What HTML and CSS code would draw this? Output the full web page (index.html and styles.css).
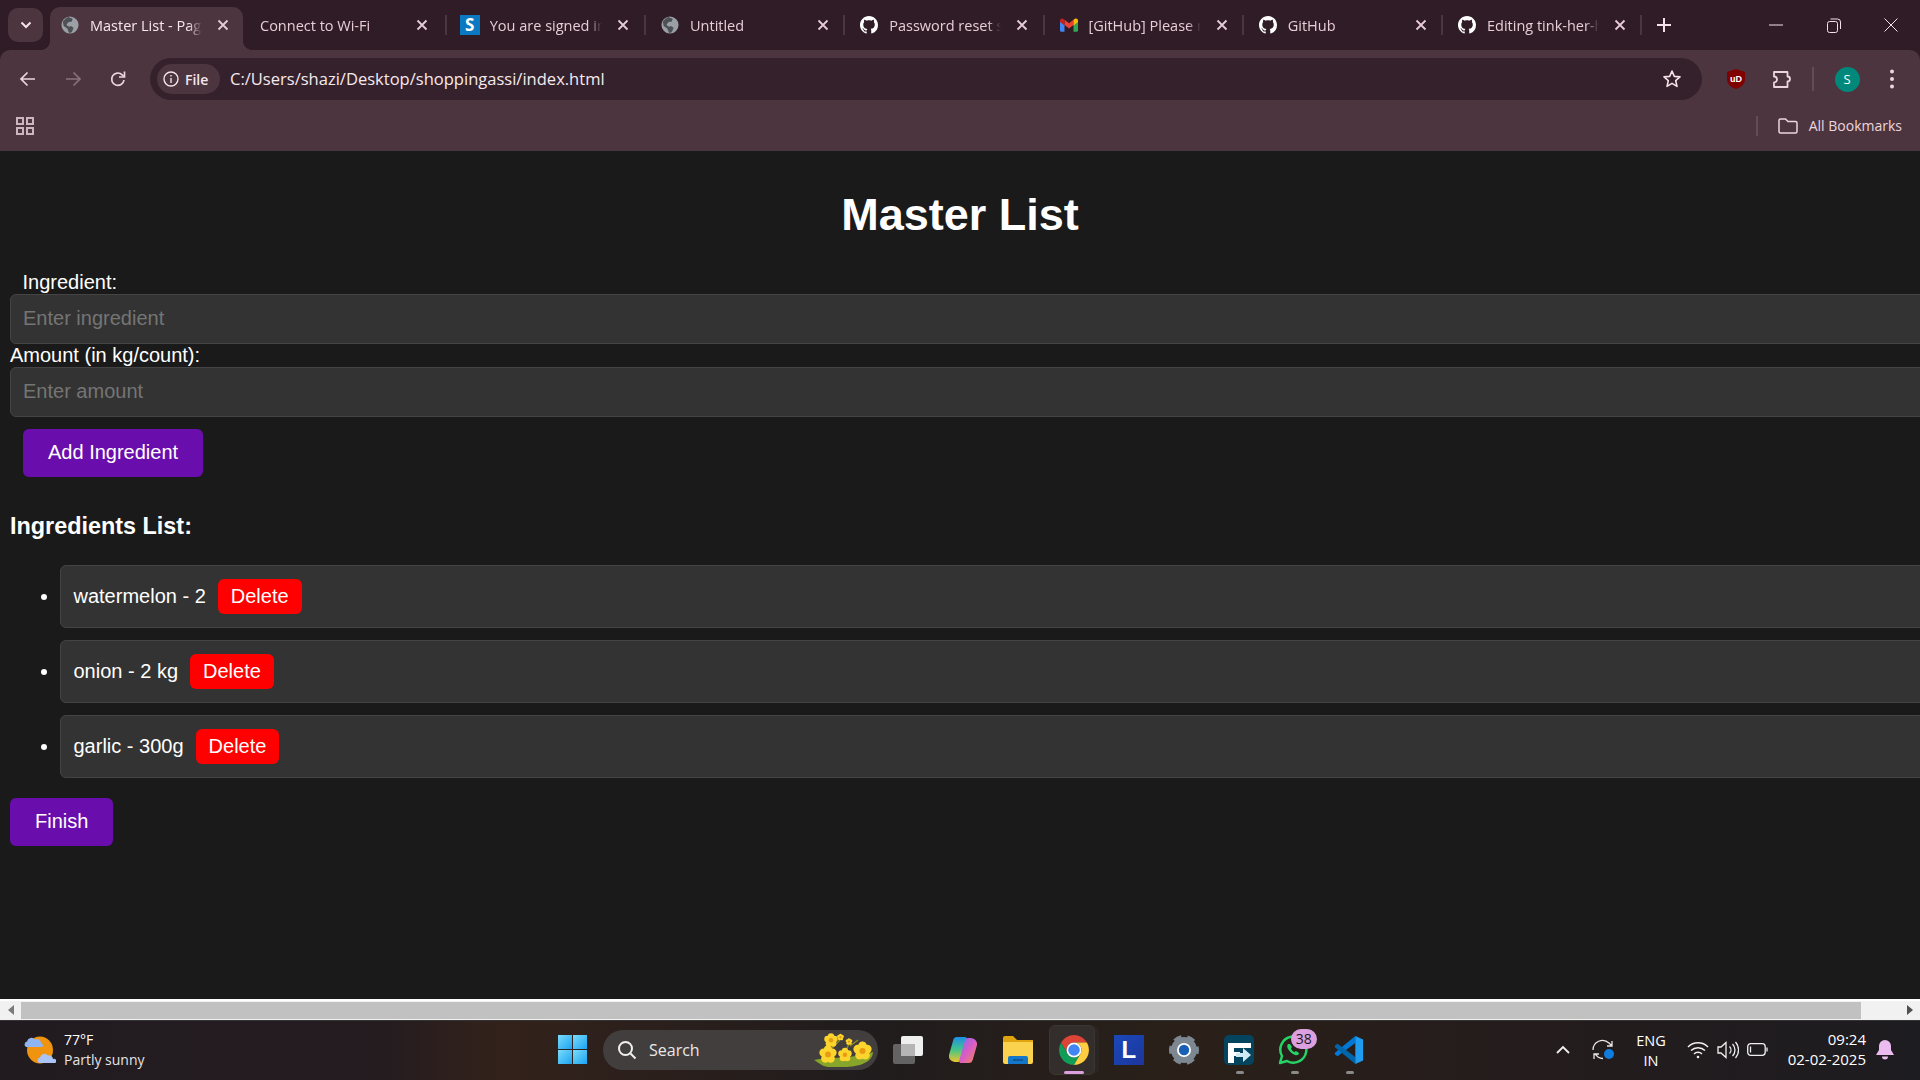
FILE: index.html
```html
<!DOCTYPE html>
<html lang="en">

<head>
    <meta charset="UTF-8">
    <title>Master List - Page</title>
    <link rel="stylesheet" href="styles.css">
</head>

<body>
    <!-- shared icons -->
    <svg class="defs" width="0" height="0">
        <symbol id="globe" viewBox="0 0 20 20">
            <circle cx="10" cy="10" r="9.500" fill="#9aa0a6" />
            <path d="M8 1 13 3 12 6 8 7 6 10 9 12 11 11 14 13 12 18 9 19 7 14 3 11 2 6 5 3z" fill="#4d5156" />
        </symbol>
        <symbol id="github" viewBox="0 0 16 16">
            <path fill="#fff" d="M8 0C3.58 0 0 3.58 0 8c0 3.54 2.29 6.53 5.47 7.59.4.07.55-.17.55-.38 0-.19-.01-.82-.01-1.49-2.01.37-2.53-.49-2.69-.94-.09-.23-.48-.94-.82-1.13-.28-.15-.68-.52-.01-.53.63-.01 1.08.58 1.23.82.72 1.21 1.87.87 2.33.66.07-.52.28-.87.51-1.07-1.78-.2-3.64-.89-3.64-3.95 0-.87.31-1.59.82-2.15-.08-.2-.36-1.02.08-2.12 0 0 .67-.21 2.2.82.64-.18 1.32-.27 2-.27.68 0 1.36.09 2 .27 1.53-1.04 2.2-.82 2.2-.82.44 1.1.16 1.92.08 2.12.51.56.82 1.27.82 2.15 0 3.07-1.87 3.75-3.65 3.95.29.25.54.73.54 1.48 0 1.07-.01 1.93-.01 2.2 0 .21.15.46.55.38A8.013 8.013 0 0016 8c0-4.42-3.58-8-8-8z" />
        </symbol>
        <symbol id="close" viewBox="0 0 12 12">
            <path d="M1.500 1.500 10.500 10.500M10.500 1.500 1.500 10.500" stroke="#e8ccd6" stroke-width="1.800" fill="none" />
        </symbol>
        <symbol id="flower" viewBox="0 0 20 20">
            <g fill="#fbd52e">
                <circle cx="10" cy="5" r="4.600" /><circle cx="15" cy="8.500" r="4.600" /><circle cx="13" cy="15" r="4.600" />
                <circle cx="7" cy="15" r="4.600" /><circle cx="5" cy="8.500" r="4.600" />
            </g>
            <circle cx="10" cy="10.500" r="3.200" fill="#e89a10" />
        </symbol>
    </svg>

    <!-- tab strip -->
    <div class="tabstrip">
        <button class="tab-search">
            <svg width="12" height="8" viewBox="0 0 12 8"><path d="M1.500 1.500 6 6l4.500-4.500" stroke="#f3e3e9" stroke-width="2" fill="none" /></svg>
        </button>
        <div class="tab active">
            <i class="flare flare-left"></i><i class="flare flare-right"></i>
            <svg class="favicon"><use href="#globe" /></svg>
            <span class="tab-title">Master List - Page</span>
            <svg class="tab-close"><use href="#close" /></svg>
        </div>
        <div class="tab no-icon">
            <span class="tab-title">Connect to Wi-Fi</span>
            <svg class="tab-close"><use href="#close" /></svg>
        </div>
        <span class="tab-sep"></span>
        <div class="tab">
            <span class="favicon favicon-s">S</span>
            <span class="tab-title">You are signed in</span>
            <svg class="tab-close"><use href="#close" /></svg>
        </div>
        <span class="tab-sep"></span>
        <div class="tab">
            <svg class="favicon"><use href="#globe" /></svg>
            <span class="tab-title">Untitled</span>
            <svg class="tab-close"><use href="#close" /></svg>
        </div>
        <span class="tab-sep"></span>
        <div class="tab">
            <svg class="favicon"><use href="#github" /></svg>
            <span class="tab-title">Password reset sent</span>
            <svg class="tab-close"><use href="#close" /></svg>
        </div>
        <span class="tab-sep"></span>
        <div class="tab">
            <svg class="favicon" viewBox="0 0 24 18">
                <path d="M0 4v12a2 2 0 0 0 2 2h4V8z" fill="#4285f4" />
                <path d="M24 4v12a2 2 0 0 1-2 2h-4V8z" fill="#34a853" />
                <path d="M6 9 12 13.500 18 9V2L12 6.500 6 2z" fill="#ea4335" />
                <path d="M0 5 6 9.500V2L4.500 1C2.500-.4 0 1 0 3.200z" fill="#c5221f" />
                <path d="M18 2V9.500L24 5V3.200C24 1 21.500-.4 19.500 1z" fill="#fbbc04" />
            </svg>
            <span class="tab-title">[GitHub] Please review</span>
            <svg class="tab-close"><use href="#close" /></svg>
        </div>
        <span class="tab-sep"></span>
        <div class="tab">
            <svg class="favicon"><use href="#github" /></svg>
            <span class="tab-title">GitHub</span>
            <svg class="tab-close"><use href="#close" /></svg>
        </div>
        <span class="tab-sep"></span>
        <div class="tab">
            <svg class="favicon"><use href="#github" /></svg>
            <span class="tab-title">Editing tink-her-hack</span>
            <svg class="tab-close"><use href="#close" /></svg>
        </div>
        <span class="tab-sep"></span>
        <button class="new-tab">
            <svg width="14" height="14" viewBox="0 0 14 14"><path d="M7 0v14M0 7h14" stroke="#f3e3e9" stroke-width="2" /></svg>
        </button>
        <div class="window-controls">
            <span><svg width="14" height="2" viewBox="0 0 14 2"><path d="M0 1h14" stroke="#f3e3e9" /></svg></span>
            <span><svg width="14" height="15" viewBox="0 0 14 15" fill="none" stroke="#f3e3e9"><rect x=".5" y="3.500" width="10" height="11" rx="2" /><path d="M3.500 1h7a3 3 0 0 1 3 3v7" /></svg></span>
            <span><svg width="14" height="14" viewBox="0 0 14 14"><path d="M.5.5l13 13M13.500.5l-13 13" stroke="#f3e3e9" /></svg></span>
        </div>
    </div>

    <!-- address bar -->
    <div class="toolbar">
        <div class="nav-btn">
            <svg width="18" height="18" viewBox="0 0 18 18" fill="none" stroke="#ecd5dd" stroke-width="1.700"><path d="M16 9H2M8.500 2.500 2 9l6.500 6.500" /></svg>
        </div>
        <div class="nav-btn">
            <svg width="18" height="18" viewBox="0 0 18 18" fill="none" stroke="#8a7079" stroke-width="1.700"><path d="M2 9h14M9.500 2.500 16 9l-6.500 6.500" /></svg>
        </div>
        <div class="nav-btn">
            <svg width="18" height="18" viewBox="0 0 18 18" fill="none" stroke="#ecd5dd" stroke-width="1.700"><path d="M15 10a6.200 6.200 0 1 1-1.800-5.200L15 6.500" /><path d="M15.500 1.500v5.500h-5.500" /></svg>
        </div>
        <div class="omnibox">
            <div class="site-chip">
                <svg width="16" height="16" viewBox="0 0 16 16" fill="none" stroke="#f3e3e9" stroke-width="1.400"><circle cx="8" cy="8" r="7" /><path d="M8 7v5M8 4v1.600" /></svg>
                <span>File</span>
            </div>
            <span class="url">C:/Users/shazi/Desktop/shoppingassi/index.html</span>
            <svg class="star" width="20" height="20" viewBox="0 0 20 20"><path d="M10 2l2.300 5.400 5.700.5-4.300 3.800 1.300 5.700L10 14.400l-5 3 1.300-5.700L2 7.900l5.700-.5z" fill="none" stroke="#f3e3e9" stroke-width="1.600" stroke-linejoin="round" /></svg>
        </div>
        <div class="toolbar-right">
            <svg class="ublock" width="18" height="20" viewBox="0 0 18 20">
                <path d="M9 0 18 3V10.500C18 15 14 18.500 9 20 4 18.500 0 15 0 10.500V3z" fill="#800000" />
                <text x="9" y="12.500" text-anchor="middle" class="ublock-text">uD</text>
            </svg>
            <svg class="puzzle" width="20" height="19" viewBox="0 0 20 19"><path d="M2 2H15.500V6.500a2.500 2.500 0 0 1 0 5V17H2V12.500a3 3 0 0 0 0-6z" fill="none" stroke="#ecd5dd" stroke-width="1.800" stroke-linejoin="round" /></svg>
            <span class="toolbar-sep"></span>
            <span class="avatar">S</span>
            <svg class="menu-dots" width="6" height="20" viewBox="0 0 6 20" fill="#ecd5dd"><circle cx="3" cy="2.500" r="2" /><circle cx="3" cy="10" r="2" /><circle cx="3" cy="17.500" r="2" /></svg>
        </div>
    </div>

    <!-- bookmarks bar -->
    <div class="bookmarks">
        <svg width="18" height="18" viewBox="0 0 18 18" fill="none" stroke="#cdb5be" stroke-width="2"><rect x="1" y="1" width="6" height="6" /><rect x="11" y="1" width="6" height="6" /><rect x="1" y="11" width="6" height="6" /><rect x="11" y="11" width="6" height="6" /></svg>
        <span class="bookmarks-sep"></span>
        <svg class="folder-icon" width="20" height="16" viewBox="0 0 20 16"><path d="M1 2.500A1.500 1.500 0 0 1 2.500 1h5L10 3.500h7.500A1.500 1.500 0 0 1 19 5v8.500a1.500 1.500 0 0 1-1.500 1.500h-15A1.500 1.500 0 0 1 1 13.500z" fill="none" stroke="#ecd5dd" stroke-width="1.500" /></svg>
        <span class="all-bookmarks">All Bookmarks</span>
    </div>

    <!-- page -->
    <div class="page">
        <h1>Master List</h1>

        <label class="label-indent" for="ingredient">Ingredient:</label>
        <input type="text" id="ingredient" placeholder="Enter ingredient">

        <label for="amount">Amount (in kg/count):</label>
        <input type="text" id="amount" placeholder="Enter amount">

        <button class="btn-purple btn-add">Add Ingredient</button>

        <h3>Ingredients List:</h3>

        <ul class="ingredients">
            <li><div class="item"><span>watermelon - 2</span><button class="btn-delete">Delete</button></div></li>
            <li><div class="item"><span>onion - 2 kg</span><button class="btn-delete">Delete</button></div></li>
            <li><div class="item"><span>garlic - 300g</span><button class="btn-delete">Delete</button></div></li>
        </ul>

        <button class="btn-purple btn-finish">Finish</button>
    </div>

    <!-- horizontal scrollbar of the page -->
    <div class="hscroll">
        <span class="arrow-left"></span>
        <div class="thumb"></div>
        <span class="arrow-right"></span>
    </div>

    <!-- windows taskbar -->
    <div class="taskbar">
        <div class="weather">
            <svg width="32" height="30" viewBox="0 0 32 30">
                <ellipse cx="16" cy="15" rx="13" ry="13.500" fill="#f0930f" />
                <path d="M2 12a3 3 0 0 1 1-5.500 4.500 4.500 0 0 1 8-2 4 4 0 0 1 6 3.500 2.200 2.200 0 0 1 1 4z" fill="#8fb4f2" />
                <path d="M15 28a3 3 0 0 1 1-5.500 4.500 4.500 0 0 1 8-2 4 4 0 0 1 5 3.500 2.200 2.200 0 0 1 2 4z" fill="#a9c4f5" />
            </svg>
            <div class="weather-text">
                <span class="temp">77°F</span>
                <span>Partly sunny</span>
            </div>
        </div>

        <div class="win-logo"><i></i><i></i><i></i><i></i></div>

        <div class="search">
            <svg width="20" height="20" viewBox="0 0 20 20" fill="none" stroke="#f0f0f0" stroke-width="2"><circle cx="8.500" cy="8.500" r="6.500" /><path d="M13.500 13.500 18.500 18.500" /></svg>
            <span>Search</span>
            <svg class="search-deco" width="60" height="35" viewBox="0 0 60 35">
                <path d="M0 28C15 25 40 27 59 20 59 30 45 35 30 35H14C8 34 5 31 0 28z" fill="#86a52a" />
                <path d="M14 20 26 8M30 22 36 10M36 14 44 8" stroke="#8f8a22" stroke-width="1.500" />
                <use href="#flower" x="5" y="13" width="18" height="18" />
                <use href="#flower" x="39" y="9" width="19" height="19" />
                <use href="#flower" x="24" y="15" width="14" height="15" />
                <use href="#flower" x="10" y="1" width="14" height="14" />
                <use href="#flower" x="23" y="0" width="7" height="10" />
                <use href="#flower" x="31" y="6" width="8" height="7" />
            </svg>
        </div>

        <div class="task-icons">
            <div class="task-btn">
                <svg width="30" height="28" viewBox="0 0 30 28">
                    <rect x="0" y="8" width="22" height="20" rx="2" fill="#636363" />
                    <rect x="8" y="0" width="22" height="20" rx="2" fill="#efefef" />
                    <rect x="8" y="8" width="14" height="12" fill="#b5b5b5" />
                </svg>
            </div>
            <div class="task-btn">
                <svg width="28" height="26" viewBox="0 0 30 28">
                    <defs>
                        <linearGradient id="cop1" x1="0" y1="0" x2="0" y2="1"><stop offset="0" stop-color="#1f8fe8" /><stop offset=".5" stop-color="#42c48a" /><stop offset="1" stop-color="#f0c42c" /></linearGradient>
                        <linearGradient id="cop2" x1="0" y1="0" x2="1" y2="1"><stop offset="0" stop-color="#7a6ef0" /><stop offset=".5" stop-color="#d85cc8" /><stop offset="1" stop-color="#f58a4a" /></linearGradient>
                    </defs>
                    <path d="M9 0h8c2 0 2.500 1.500 2 3L13 24c-.8 2.500-2.500 3-5 3-5 0-9-3-8-8L4 5C5 1 6 0 9 0z" fill="url(#cop1)" />
                    <path d="M21 28h-8c-2 0-2.500-1.500-2-3L17 4c.8-2.500 2.500-3 5-3 5 0 9 3 8 8l-4 14c-1 4-2 5-5 5z" fill="url(#cop2)" />
                </svg>
            </div>
            <div class="task-btn">
                <svg width="30" height="28" viewBox="0 0 30 28">
                    <path d="M0 2a2 2 0 0 1 2-2h8l4 4h16v4H0z" fill="#e0a410" />
                    <path d="M0 6h30v20a2 2 0 0 1-2 2H2a2 2 0 0 1-2-2z" fill="#fbd24e" />
                    <path d="M5 28v-6a2 2 0 0 1 2-2h16a2 2 0 0 1 2 2v6z" fill="#1577c9" />
                    <path d="M10 24h10" stroke="#0c4f8c" stroke-width="1.500" />
                </svg>
            </div>
            <div class="task-btn task-active">
                <svg width="30" height="30" viewBox="2 2 44 44">
                    <path d="M5 13A22 22 0 0 1 43 13H24A11 11 0 0 0 14.470 29.500z" fill="#db4437" />
                    <path d="M5 13A22 22 0 0 0 24 46L33.530 29.500A11 11 0 0 1 14.470 29.500z" fill="#0f9d58" />
                    <path d="M43 13A22 22 0 0 1 24 46L33.530 29.500A11 11 0 0 0 24 13z" fill="#ffcd40" />
                    <circle cx="24" cy="24" r="11" fill="#fff" />
                    <circle cx="24" cy="24" r="8.500" fill="#4285f4" />
                </svg>
                <i class="task-mark"></i>
            </div>
            <div class="task-btn"><span class="icon-l">L</span></div>
            <div class="task-btn">
                <svg width="30" height="30" viewBox="0 0 30 30">
                    <circle cx="15" cy="15" r="9.500" fill="none" stroke="#7d8791" stroke-width="7" />
                    <circle cx="15" cy="15" r="13" fill="none" stroke="#7d8791" stroke-width="4" stroke-dasharray="7.600 6" stroke-dashoffset="3.800" />
                    <circle cx="15" cy="15" r="7" fill="#fff" />
                    <circle cx="15" cy="15" r="5.200" fill="#1760b5" />
                </svg>
            </div>
            <div class="task-btn">
                <svg width="30" height="30" viewBox="0 0 30 30">
                    <rect width="30" height="30" rx="5" fill="#05445e" />
                    <path d="M4 8H27V13H10V17H16V21H10V28H4z" fill="#fff" />
                    <path d="M12 18H19V13L27 20 19 27V22H12z" fill="#cfeaf5" />
                </svg>
                <i class="task-dot"></i>
            </div>
            <div class="task-btn">
                <svg class="whatsapp" width="30" height="30" viewBox="0 0 30 30">
                    <path d="M2 28l2-7A13 13 0 1 1 9 26z" fill="none" stroke="#25d366" stroke-width="2.500" stroke-linejoin="round" />
                    <path d="M10 9c-1 1-1 3 0 5 2 3 4 5 7 6 2 .5 4 0 4-2l-3-2-1.500 1c-1.500-.5-3-2-3.500-3.500l1-1.500-2-3z" fill="#25d366" />
                </svg>
                <span class="badge">38</span>
                <i class="task-dot"></i>
            </div>
            <div class="task-btn">
                <svg width="30" height="30" viewBox="0 0 100 100">
                    <path d="M71 3V27L12 71 3 65V59z" fill="#0078d4" />
                    <path d="M71 97V73L12 29 3 35V41z" fill="#0065a9" />
                    <path d="M71 3 97 15V85L71 97z" fill="#1f9cf0" />
                </svg>
                <i class="task-dot"></i>
            </div>
        </div>

        <div class="tray">
            <svg class="tray-chevron" width="14" height="9" viewBox="0 0 14 9"><path d="M1 8l6-6 6 6" fill="none" stroke="#f0f0f0" stroke-width="1.800" /></svg>
            <svg class="tray-sync" width="24" height="24" viewBox="0 0 24 24" fill="none" stroke="#e8e8e8" stroke-width="1.300">
                <path d="M2 12a9.500 9.500 0 0 1 16-7l3 3M21 3v5h-5M4 16l3 3a9 9 0 0 0 5 1.500M3 21v-5h5" />
                <circle cx="18" cy="16" r="5" fill="#0f7ddb" stroke="none" />
            </svg>
            <div class="tray-lang"><span>ENG</span><span>IN</span></div>
            <svg class="tray-wifi" width="22" height="18" viewBox="0 0 22 18" fill="none" stroke="#f0f0f0" stroke-width="1.500"><path d="M1 6a14 14 0 0 1 20 0M4 9.500a10 10 0 0 1 14 0M7 13a5.500 5.500 0 0 1 8 0" /><circle cx="11" cy="16" r="1.300" fill="#f0f0f0" stroke="none" /></svg>
            <svg class="tray-volume" width="22" height="18" viewBox="0 0 22 18" fill="none" stroke="#f0f0f0" stroke-width="1.300"><path d="M1 6h3l5-4.500v15L4 12H1zM12.500 5.500a5 5 0 0 1 0 7M15.500 3a8.500 8.500 0 0 1 0 12M18.500 1a12 12 0 0 1 0 16" /></svg>
            <svg class="tray-battery" width="22" height="13" viewBox="0 0 22 13" fill="none" stroke="#f0f0f0" stroke-width="1.300"><rect x=".7" y=".7" width="17.500" height="11.600" rx="3" /><path d="M3.500 3.500v6M20 4.500v4" /></svg>
            <div class="tray-clock"><span>09:24</span><span>02-02-2025</span></div>
            <svg class="tray-bell" width="18" height="20" viewBox="0 0 18 20" fill="#ecbcf0"><path d="M9 0a6 6 0 0 1 6 6v4l3 5H0l3-5V6a6 6 0 0 1 6-6z" /><path d="M6 16.500h6a3 3 0 0 1-6 0z" /></svg>
        </div>
    </div>
</body>

</html>
```

FILE: styles.css
```css
* {
    box-sizing: border-box;
}

body {
    margin: 0;
    width: 1920px;
    height: 1080px;
    overflow: hidden;
    display: flex;
    flex-direction: column;
    background-color: #2f1c26;
    font-family: "Open Sans", "Liberation Sans", sans-serif;
}

.defs {
    position: absolute;
}

button {
    font-family: inherit;
    border: none;
}

/* tab strip */
.tabstrip {
    height: 50px;
    flex: none;
    display: flex;
    align-items: center;
}

.tab-search {
    width: 35px;
    height: 34px;
    margin: 0 3px 0 8px;
    padding: 0;
    border-radius: 10px;
    background-color: #4d3540;
    display: flex;
    align-items: center;
    justify-content: center;
}

.tab {
    position: relative;
    width: 197.250px;
    height: 50px;
    flex: none;
    display: flex;
    align-items: center;
    padding-left: 15px;
    font-size: 14.500px;
    color: #e8ccd6;
}

.tab.no-icon {
    padding-left: 14px;
    width: 198.750px;
}

.tab.active {
    width: 200px;
    color: #f5e6ec;
}

.tab.active::before {
    content: "";
    position: absolute;
    left: 4px;
    right: 3px;
    top: 7px;
    bottom: 0;
    background-color: #4d3540;
    border-radius: 10px 10px 0 0;
}

.flare {
    position: absolute;
    bottom: 0;
    width: 10px;
    height: 10px;
    background: radial-gradient(circle at 0 0, transparent 10px, #4d3540 10.500px);
}

.flare-left {
    left: -6px;
}

.flare-right {
    right: -7px;
    background: radial-gradient(circle at 100% 0, transparent 10px, #4d3540 10.500px);
}

.favicon {
    position: relative;
    width: 18px;
    height: 18px;
    flex: none;
    margin-right: 11px;
}

.favicon-s {
    width: 20px;
    height: 20px;
    margin: 0 10px 0 -2px;
    background-color: #0b78c2;
    color: #fff;
    font-weight: 700;
    font-size: 17px;
    line-height: 20px;
    text-align: center;
}

.tab-title {
    position: relative;
    width: 112px;
    flex: none;
    white-space: nowrap;
    overflow: hidden;
    -webkit-mask-image: linear-gradient(to right, #000 88%, transparent 100%);
    mask-image: linear-gradient(to right, #000 88%, transparent 100%);
}

.no-icon .tab-title {
    width: 148px;
}

.tab-close {
    position: relative;
    width: 12px;
    height: 12px;
    flex: none;
    margin-left: 15px;
}

.no-icon .tab-close {
    margin-left: 8px;
}

.tab-sep {
    width: 2px;
    height: 20px;
    flex: none;
    background-color: #4d3540;
}

.new-tab {
    width: 14px;
    height: 14px;
    margin-left: 15px;
    padding: 0;
    background: none;
    display: flex;
}

.window-controls {
    margin-left: auto;
    display: flex;
}

.window-controls span {
    width: 57.500px;
    height: 40px;
    display: flex;
    align-items: center;
    justify-content: center;
}

/* address bar */
.toolbar {
    height: 50px;
    flex: none;
    display: flex;
    align-items: center;
    padding: 8px 0 0 5px;
    background-color: #4d3540;
    border-radius: 10px 10px 0 0;
}

.nav-btn {
    width: 45px;
    display: flex;
    justify-content: center;
}

.omnibox {
    width: 1552px;
    height: 42px;
    margin-left: 10px;
    padding-left: 7px;
    flex: none;
    display: flex;
    align-items: center;
    background-color: #35212b;
    border-radius: 21px;
}

.site-chip {
    width: 63px;
    height: 30px;
    flex: none;
    display: flex;
    align-items: center;
    gap: 6px;
    padding-left: 6px;
    border-radius: 15px;
    background-color: #4d3540;
    color: #f5e6ec;
    font-size: 14px;
    font-weight: 600;
}

.url {
    margin-left: 10px;
    font-size: 16.550px;
    line-height: 20px;
    padding-bottom: 1px;
    color: #f5e9ee;
}

.star {
    margin-left: auto;
    margin-right: 20px;
}

.toolbar-right {
    display: flex;
    align-items: center;
}

.ublock {
    margin-left: 25px;
}

.ublock-text {
    font-family: "Liberation Sans", sans-serif;
    font-size: 9px;
    font-weight: 700;
    fill: #fff;
}

.puzzle {
    margin-left: 27px;
}

.toolbar-sep {
    width: 2px;
    height: 24px;
    margin-left: 20px;
    background-color: #644b56;
}

.avatar {
    width: 25px;
    height: 25px;
    margin-left: 20.500px;
    border-radius: 50%;
    background-color: #00897b;
    color: #fff;
    font-size: 13px;
    line-height: 25px;
    text-align: center;
}

.menu-dots {
    margin-left: 29.500px;
}

/* bookmarks bar */
.bookmarks {
    height: 51px;
    flex: none;
    display: flex;
    align-items: center;
    padding: 0 18px 0 16px;
    background-color: #4d3540;
}

.bookmarks-sep {
    width: 2px;
    height: 20px;
    margin-left: auto;
    background-color: #644b56;
}

.folder-icon {
    margin-left: 20px;
}

.all-bookmarks {
    margin-left: 11px;
    font-size: 14px;
    color: #ecd5dd;
}

/* page content */
.page {
    flex: 1;
    min-height: 0;
    overflow: hidden;
    padding: 0 10px;
    background-color: #1a1a1a;
    color: #fff;
    font-family: "Liberation Sans", Arial, sans-serif;
    font-size: 20px;
}

h1 {
    margin: 38px 0 30px;
    font-size: 45px;
    line-height: 52px;
    text-align: center;
}

label {
    display: block;
    line-height: 23px;
}

.label-indent {
    margin-left: 12.500px;
}

input {
    display: block;
    width: 1950px;
    height: 50px;
    padding: 0 12px 2px;
    background-color: #333;
    border: 1px solid #444;
    border-radius: 6px;
    color: #fff;
    font-family: inherit;
    font-size: 20px;
}

input::placeholder {
    color: #757575;
}

.btn-purple {
    display: block;
    height: 48px;
    padding: 0 25px 2px;
    background-color: #6a0dad;
    border-radius: 6px;
    color: #fff;
    font-family: inherit;
    font-size: 20px;
}

.btn-add {
    margin: 12px 0 0 13px;
}

h3 {
    margin: 36px 0 25px;
    font-size: 23.400px;
    line-height: 27px;
}

.ingredients {
    width: 1950px;
    margin: 0;
    padding-left: 50px;
}

.ingredients li {
    height: 63px;
    margin-bottom: 12px;
    padding: 0 13px 0 12.500px;
    background-color: #333;
    border: 1px solid #444;
    border-radius: 6px;
}

.item {
    height: 61px;
    display: flex;
    align-items: center;
    gap: 12px;
}

.btn-delete {
    height: 35px;
    padding: 0 13px;
    background-color: #f00;
    border-radius: 6px;
    color: #fff;
    font-family: inherit;
    font-size: 20px;
}

.btn-finish {
    margin-top: 20px;
}

/* page scrollbar */
.hscroll {
    height: 21px;
    flex: none;
    display: flex;
    align-items: center;
    background-color: #f1f1f1;
    border-top: 2px solid #fff;
    border-bottom: 1px solid #f1f1f1;
}

.arrow-left,
.arrow-right {
    width: 0;
    height: 0;
    border-top: 5px solid transparent;
    border-bottom: 5px solid transparent;
}

.arrow-left {
    margin: 0 7px 0 8px;
    border-right: 6px solid #7a7a7a;
}

.arrow-right {
    margin-left: 46px;
    border-left: 6px solid #505050;
}

.thumb {
    width: 1840px;
    height: 17px;
    background-color: #c1c1c1;
}

/* taskbar */
.taskbar {
    height: 60px;
    flex: none;
    display: flex;
    align-items: center;
    padding-bottom: 2px;
    border-top: 1px solid #333;
    background: linear-gradient(to right, #211b20 0, #251c20 20%, #33221b 26%, #201c1d 45%, #2a2019 62%, #241c1d 80%, #1d1c20 100%);
    color: #fff;
    font-family: "Open Sans", "Liberation Sans", sans-serif;
    font-size: 14.500px;
}

.weather {
    width: 558px;
    flex: none;
    display: flex;
    align-items: center;
    gap: 8px;
    padding-left: 24px;
    font-size: 14px;
}

.weather-text {
    display: flex;
    flex-direction: column;
    line-height: 20px;
    color: #e4e4e4;
}

.temp {
    color: #fff;
}

.win-logo {
    width: 29px;
    height: 29px;
    flex: none;
    display: grid;
    grid-template-columns: 1fr 1fr;
    gap: 1px;
}

.win-logo i {
    background: linear-gradient(135deg, #7bdcf8, #1aa3f5);
}

.search {
    width: 275px;
    height: 40px;
    margin-left: 16px;
    flex: none;
    display: flex;
    align-items: center;
    padding-left: 14px;
    background-color: #433e3e;
    border-radius: 20px;
    font-size: 16px;
    color: #e8e8e8;
}

.search span {
    margin-left: 12px;
}

.search-deco {
    margin-left: auto;
    margin-right: 4px;
}

.task-icons {
    margin-left: 2.400px;
    flex: none;
    display: flex;
}

.task-btn {
    position: relative;
    width: 55.200px;
    height: 50px;
    display: flex;
    align-items: center;
    justify-content: center;
}

.task-btn svg {
    position: relative;
}

.task-active::before {
    content: "";
    position: absolute;
    left: 3px;
    top: 0;
    bottom: 0;
    width: 44px;
    background-color: #332d2b;
    border: 1px solid #3c3633;
    border-radius: 6px;
    box-shadow: 5px 0 0 -1px #2a2422;
}

.task-mark {
    position: absolute;
    left: 18px;
    bottom: 1px;
    width: 20px;
    height: 3px;
    border-radius: 2px;
    background-color: #dca0e0;
}

.task-dot {
    position: absolute;
    left: 24px;
    bottom: 1px;
    width: 8px;
    height: 3px;
    border-radius: 2px;
    background-color: #8a8a8a;
}

.icon-l {
    width: 30px;
    height: 30px;
    background: linear-gradient(135deg, #1a49b8, #1d359c);
    font-family: "Liberation Sans", sans-serif;
    font-size: 24px;
    font-weight: 700;
    line-height: 30px;
    text-align: center;
}

.whatsapp {
    margin-left: -3px;
}

.badge {
    position: absolute;
    left: 24px;
    top: 4px;
    width: 26px;
    height: 20px;
    border-radius: 10px;
    background-color: #dca0e0;
    color: #1a1a1a;
    font-size: 14px;
    line-height: 20px;
    text-align: center;
}

.tray {
    margin-left: auto;
    padding-right: 26px;
    display: flex;
    align-items: center;
}

.tray-sync {
    margin-left: 21px;
}

.tray-lang {
    width: 40px;
    margin-left: 16px;
    padding-top: 2px;
    display: flex;
    flex-direction: column;
    align-items: center;
    line-height: 20px;
}

.tray-wifi {
    margin-left: 16px;
}

.tray-volume,
.tray-battery {
    margin-left: 8px;
}

.tray-clock {
    width: 88px;
    margin-left: 9px;
    padding-bottom: 2px;
    display: flex;
    flex-direction: column;
    align-items: flex-end;
    font-size: 15px;
    line-height: 20px;
}

.tray-bell {
    margin-left: 10px;
}
```
